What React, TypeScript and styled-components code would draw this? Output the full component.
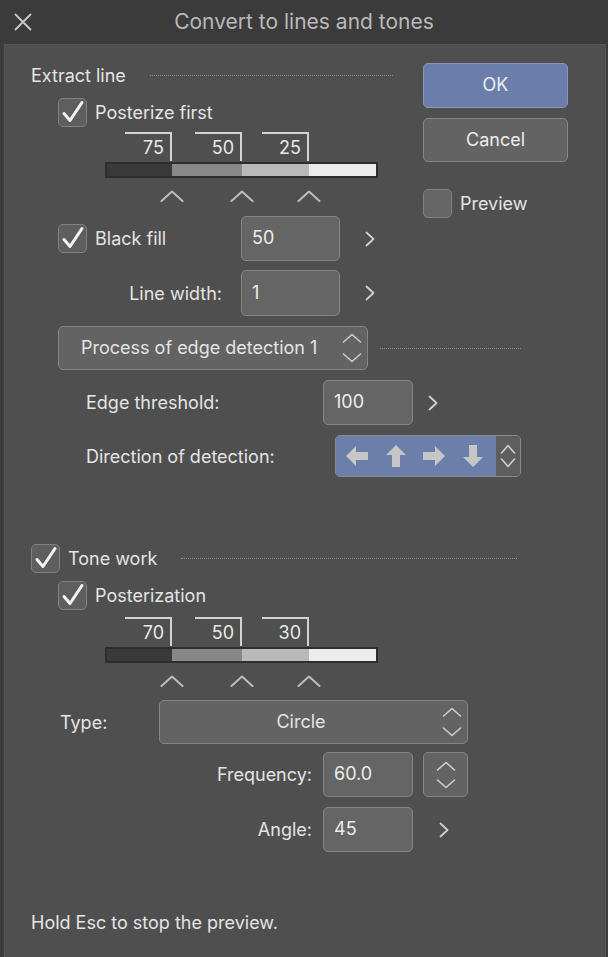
import * as React from "react"
import styled, {createGlobalStyle} from "styled-components"

const GlobalStyle = createGlobalStyle`
    html, body {
        margin: 0;
        padding: 0;
        background: #3b3b3b;
    }
    body {
        font-family: "Inter", "Noto Sans", sans-serif;
        color: #e4e4e4;
    }
`

const Dialog = styled.div`
    width: 608px;
    height: 957px;
    background: #3b3b3b;
    display: flex;
    flex-direction: column;
`

const TitleBar = styled.div`
    height: 44px;
    display: grid;
    grid-template-columns: 44px 1fr 44px;
    align-items: center;
    flex-shrink: 0;
`

const CloseButton = styled.div`
    display: flex;
    align-items: center;
    justify-content: center;
    padding-left: 2px;
`

const Title = styled.div`
    text-align: center;
    font-size: 21px;
    color: #b9b9b9;
    padding-bottom: 1px;
`

const Body = styled.div`
    flex: 1;
    margin: 0 2px 0 4px;
    background: #4f4f4f;
    border: 1px dotted #5c5c5c;
    border-bottom: none;
    display: flex;
    flex-direction: column;
`

const TopSection = styled.div`
    display: flex;
`

const LeftCol = styled.div`
    width: 418px;
    display: flex;
    flex-direction: column;
`

const RightCol = styled.div`
    width: 145px;
    padding-top: 18px;
    display: flex;
    flex-direction: column;
`

const Row = styled.div<{ $indent: number; $top: number; $height: number }>`
    display: flex;
    align-items: center;
    margin-left: ${p => p.$indent}px;
    margin-top: ${p => p.$top}px;
    height: ${p => p.$height}px;
    font-size: 18px;
    flex-shrink: 0;
`

const SectionHeader = styled(Row)<{ $width: number }>`
    width: ${p => p.$width}px;
`

const Rule = styled.div<{ $gap: number }>`
    flex: 1;
    margin-left: ${p => p.$gap}px;
    border-top: 1px dotted #8c8c8c;
    height: 0;
    align-self: center;
`

const FixedRule = styled.div<{ $gap: number; $width: number }>`
    margin-left: ${p => p.$gap}px;
    width: ${p => p.$width}px;
    border-top: 1px dotted #8c8c8c;
    height: 0;
`

const LabelSlot = styled.div<{ $width: number; $right?: boolean; $pad?: number }>`
    width: ${p => p.$width}px;
    flex-shrink: 0;
    display: flex;
    align-items: center;
    justify-content: ${p => (p.$right ? "flex-end" : "flex-start")};
    padding-right: ${p => p.$pad || 0}px;
    box-sizing: border-box;
    white-space: nowrap;
`

const CheckBox = styled.div<{ $checked?: boolean }>`
    width: 29px;
    height: 29px;
    box-sizing: border-box;
    border: 1px solid #828282;
    border-radius: 5px;
    background: ${p => (p.$checked ? "#5e5e5e" : "#656565")};
    display: flex;
    align-items: center;
    justify-content: center;
    flex-shrink: 0;
`

const CheckText = styled.span`
    margin-left: 8px;
    white-space: nowrap;
`

const NumberInput = styled.div<{ $width: number }>`
    width: ${p => p.$width}px;
    height: 100%;
    box-sizing: border-box;
    border: 1px solid #858585;
    border-radius: 5px;
    background: #656565;
    padding-left: 10px;
    padding-bottom: 2px;
    display: flex;
    align-items: center;
    color: #ececec;
    flex-shrink: 0;
`

const ChevronSlot = styled.div<{ $width: number }>`
    width: ${p => p.$width}px;
    display: flex;
    justify-content: center;
    align-items: center;
    flex-shrink: 0;
`

const Select = styled.div<{ $width: number; $center?: boolean }>`
    width: ${p => p.$width}px;
    height: 100%;
    box-sizing: border-box;
    border: 1px solid #858585;
    border-radius: 5px;
    background: #636363;
    display: flex;
    align-items: center;
    flex-shrink: 0;
    padding-left: ${p => (p.$center ? 0 : 22)}px;
`

const SelectText = styled.div<{ $center?: boolean }>`
    flex: 1;
    text-align: ${p => (p.$center ? "center" : "left")};
    padding-left: ${p => (p.$center ? 5 : 0)}px;
    padding-bottom: 2px;
    white-space: nowrap;
`

const SpinnerIcon = styled.div<{ $width: number }>`
    width: ${p => p.$width}px;
    display: flex;
    justify-content: center;
    align-items: center;
    flex-shrink: 0;
`

const SpinnerBox = styled.div`
    width: 45px;
    height: 100%;
    margin-left: 10px;
    box-sizing: border-box;
    border: 1px solid #858585;
    border-radius: 5px;
    background: #636363;
    display: flex;
    align-items: center;
    justify-content: center;
`

const DirectionControl = styled.div`
    width: 186px;
    height: 100%;
    box-sizing: border-box;
    border: 1px solid #8a8a8a;
    border-radius: 5px;
    overflow: hidden;
    display: flex;
`

const DirectionArrows = styled.div`
    flex: 1;
    background: #6c7faa;
    display: flex;
    align-items: center;
    justify-content: space-around;
    padding: 0 4px 0 2px;
`

const DirectionSpin = styled.div`
    width: 24px;
    background: #5e5e5e;
    display: flex;
    align-items: center;
    justify-content: center;
`

const DialogButton = styled.div<{ $primary?: boolean; $top: number; $height: number }>`
    height: ${p => p.$height}px;
    margin-top: ${p => p.$top}px;
    box-sizing: border-box;
    border: 1px solid ${p => (p.$primary ? "#8896b8" : "#858585")};
    border-radius: 5px;
    background: ${p => (p.$primary ? "#6b7eab" : "#636363")};
    display: flex;
    align-items: center;
    justify-content: center;
    font-size: 18px;
    color: #ececec;
    padding-bottom: 2px;
`

const PreviewRow = styled.div`
    display: flex;
    align-items: center;
    margin-top: 26px;
    height: 30px;
    font-size: 18px;
`

/* posterize slider */

const Slider = styled.div<{ $indent: number; $top: number }>`
    margin-left: ${p => p.$indent}px;
    margin-top: ${p => p.$top}px;
    width: 273px;
    height: 66px;
    display: flex;
    flex-direction: column;
    flex-shrink: 0;
`

const SliderTrack = styled.div`
    display: flex;
`

const SliderSlot = styled.div<{ $width: number }>`
    width: ${p => p.$width}px;
    display: flex;
    justify-content: flex-end;
    flex-shrink: 0;
`

const ValueBox = styled.div`
    width: 47px;
    height: 29px;
    box-sizing: border-box;
    border-top: 2px solid #d2d2d2;
    border-right: 2px solid #d2d2d2;
    text-align: right;
    padding-right: 6px;
    padding-top: 3px;
    font-size: 18px;
    color: #e8e8e8;
`

const Bar = styled.div`
    display: flex;
    height: 16px;
    margin-top: 1px;
    box-sizing: border-box;
    border: 2px solid #2d2d2d;
`

const BarSegment = styled.div<{ $width: number; $shade: string }>`
    width: ${p => p.$width}px;
    background: ${p => p.$shade};
    flex-shrink: 0;
`

const CaretRow = styled.div`
    display: flex;
    margin-top: 8px;
`

const Caret = styled.div`
    margin-right: -12px;
    width: 24px;
    height: 12px;
`

const Footer = styled.div`
    margin-left: 26px;
    margin-top: 60px;
    height: 22px;
    line-height: 22px;
    font-size: 18px;
`

const CheckMark = () => (
    <svg width="27" height="27" viewBox="0 0 27 27">
        <path d="M5 14.5 L11 21.5 L23 3.5" fill="none" stroke="#f4f4f4" strokeWidth="3" strokeLinecap="round" strokeLinejoin="round"/>
    </svg>
)

const RightChevron = () => (
    <svg width="12" height="16" viewBox="0 0 12 16">
        <path d="M2.5 1.5 L9.5 8 L2.5 14.5" fill="none" stroke="#d0d0d0" strokeWidth="1.8" strokeLinecap="round" strokeLinejoin="round"/>
    </svg>
)

const UpDown = ({gap = 10, size = 20}: { gap?: number; size?: number }) => {
    const m = size / 2
    return (
        <svg width={size} height={20 + gap} viewBox={`0 0 ${size} ${20 + gap}`}>
            <path d={`M1.5 9 L${m} 1.5 L${size - 1.5} 9`} fill="none" stroke="#cfcfcf" strokeWidth="1.6" strokeLinecap="round" strokeLinejoin="round"/>
            <path d={`M1.5 ${11 + gap} L${m} ${18.5 + gap} L${size - 1.5} ${11 + gap}`} fill="none" stroke="#cfcfcf" strokeWidth="1.6" strokeLinecap="round" strokeLinejoin="round"/>
        </svg>
    )
}

const CloseIcon = () => (
    <svg width="18" height="18" viewBox="0 0 18 18">
        <path d="M1.5 1.5 L16.5 16.5 M16.5 1.5 L1.5 16.5" stroke="#c9c9c9" strokeWidth="1.8" strokeLinecap="round"/>
    </svg>
)

const Arrow = ({rotate}: { rotate: number }) => (
    <svg width="24" height="24" viewBox="0 0 24 24" style={{transform: `rotate(${rotate}deg)`}}>
        <path d="M1 12 L11 2 L11 8 L23 8 L23 16 L11 16 L11 22 Z" fill="#c6c6c6"/>
    </svg>
)

const segments = [
    {width: 65, shade: "#3a3a3a"},
    {width: 70, shade: "#888888"},
    {width: 67, shade: "#b9b9b9"},
    {width: 67, shade: "#ececec"},
]

const slotWidths = [67, 70, 67]

const ToneSlider = ({values, indent, top}: { values: string[]; indent: number; top: number }) => (
    <Slider $indent={indent} $top={top}>
        <SliderTrack>
            {values.map((v, i) => (
                <SliderSlot key={i} $width={slotWidths[i]}>
                    <ValueBox>{v}</ValueBox>
                </SliderSlot>
            ))}
        </SliderTrack>
        <Bar>
            {segments.map((s, i) => (
                <BarSegment key={i} $width={s.width} $shade={s.shade}/>
            ))}
        </Bar>
        <CaretRow>
            {values.map((v, i) => (
                <SliderSlot key={i} $width={slotWidths[i]}>
                    <Caret>
                        <svg width="24" height="12" viewBox="0 0 24 12">
                            <path d="M1.5 11 L12 1.5 L22.5 11" fill="none" stroke="#bdbdbd" strokeWidth="2" strokeLinecap="round" strokeLinejoin="round"/>
                        </svg>
                    </Caret>
                </SliderSlot>
            ))}
        </CaretRow>
    </Slider>
)

export default function App() {
    return (
        <Dialog>
            <GlobalStyle/>
            <TitleBar>
                <CloseButton><CloseIcon/></CloseButton>
                <Title>Convert to lines and tones</Title>
                <div/>
            </TitleBar>
            <Body>
                <TopSection>
                    <LeftCol>
                        <SectionHeader $indent={26} $top={18} $height={24} $width={362}>
                            <span>Extract line</span>
                            <Rule $gap={24}/>
                        </SectionHeader>
                        <Row $indent={53} $top={11} $height={29}>
                            <CheckBox $checked><CheckMark/></CheckBox>
                            <CheckText>Posterize first</CheckText>
                        </Row>
                        <ToneSlider values={["75", "50", "25"]} indent={100} top={5}/>
                        <Row $indent={53} $top={18} $height={45}>
                            <LabelSlot $width={183}>
                                <CheckBox $checked><CheckMark/></CheckBox>
                                <CheckText>Black fill</CheckText>
                            </LabelSlot>
                            <NumberInput $width={99}>50</NumberInput>
                            <ChevronSlot $width={60}><RightChevron/></ChevronSlot>
                        </Row>
                        <Row $indent={53} $top={9} $height={46}>
                            <LabelSlot $width={183} $right $pad={19}>Line width:</LabelSlot>
                            <NumberInput $width={99}>1</NumberInput>
                            <ChevronSlot $width={60}><RightChevron/></ChevronSlot>
                        </Row>
                    </LeftCol>
                    <RightCol>
                        <DialogButton $primary $top={0} $height={45}>OK</DialogButton>
                        <DialogButton $top={10} $height={44}>Cancel</DialogButton>
                        <PreviewRow>
                            <CheckBox/>
                            <CheckText>Preview</CheckText>
                        </PreviewRow>
                    </RightCol>
                </TopSection>

                <Row $indent={53} $top={10} $height={44}>
                    <Select $width={310}>
                        <SelectText>Process of edge detection 1</SelectText>
                        <SpinnerIcon $width={30}><UpDown/></SpinnerIcon>
                    </Select>
                    <FixedRule $gap={12} $width={141}/>
                </Row>
                <Row $indent={81} $top={10} $height={45}>
                    <LabelSlot $width={237}>Edge threshold:</LabelSlot>
                    <NumberInput $width={90}>100</NumberInput>
                    <ChevronSlot $width={40}><RightChevron/></ChevronSlot>
                </Row>
                <Row $indent={81} $top={10} $height={42}>
                    <LabelSlot $width={249}>Direction of detection:</LabelSlot>
                    <DirectionControl>
                        <DirectionArrows>
                            <Arrow rotate={0}/>
                            <Arrow rotate={90}/>
                            <Arrow rotate={180}/>
                            <Arrow rotate={270}/>
                        </DirectionArrows>
                        <DirectionSpin><UpDown gap={4} size={16}/></DirectionSpin>
                    </DirectionControl>
                </Row>

                <SectionHeader $indent={26} $top={67} $height={29} $width={486}>
                    <CheckBox $checked><CheckMark/></CheckBox>
                    <CheckText>Tone work</CheckText>
                    <Rule $gap={24}/>
                </SectionHeader>
                <Row $indent={53} $top={8} $height={29}>
                    <CheckBox $checked><CheckMark/></CheckBox>
                    <CheckText>Posterization</CheckText>
                </Row>
                <ToneSlider values={["70", "50", "30"]} indent={100} top={7}/>
                <Row $indent={55} $top={17} $height={44}>
                    <LabelSlot $width={99}>Type:</LabelSlot>
                    <Select $width={309} $center>
                        <SelectText $center>Circle</SelectText>
                        <SpinnerIcon $width={30}><UpDown/></SpinnerIcon>
                    </Select>
                </Row>
                <Row $indent={55} $top={8} $height={45}>
                    <LabelSlot $width={263} $right $pad={11}>Frequency:</LabelSlot>
                    <NumberInput $width={90}>60.0</NumberInput>
                    <SpinnerBox><UpDown gap={8}/></SpinnerBox>
                </Row>
                <Row $indent={55} $top={10} $height={45}>
                    <LabelSlot $width={263} $right $pad={11}>Angle:</LabelSlot>
                    <NumberInput $width={90}>45</NumberInput>
                    <ChevronSlot $width={62}><RightChevron/></ChevronSlot>
                </Row>
                <Footer>Hold Esc to stop the preview.</Footer>
            </Body>
        </Dialog>
    )
}
